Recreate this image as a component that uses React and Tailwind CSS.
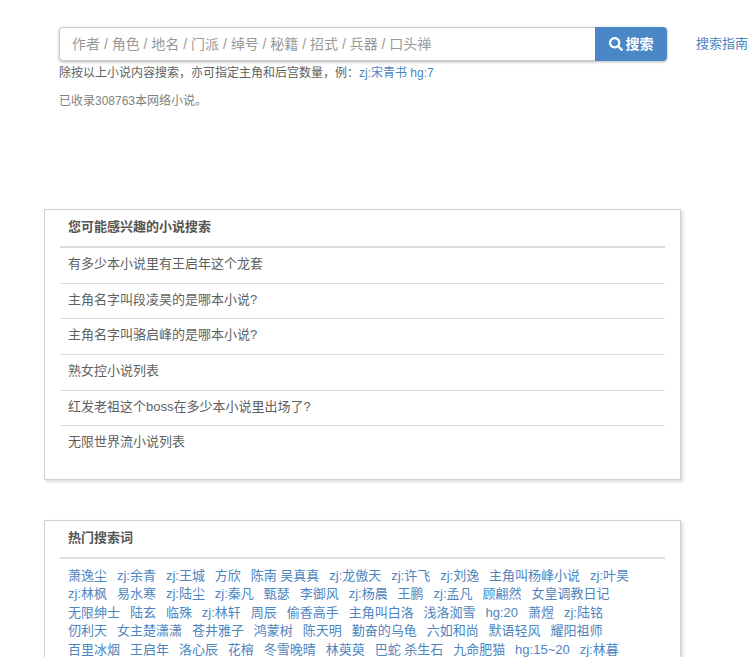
import React from 'react';
import { FaSearch } from 'react-icons/fa';

const interestRows = [
  '有多少本小说里有王启年这个龙套',
  '主角名字叫段凌昊的是哪本小说?',
  '主角名字叫骆启峰的是哪本小说?',
  '熟女控小说列表',
  '红发老祖这个boss在多少本小说里出场了?',
  '无限世界流小说列表',
];

const hotTerms = [
  '萧逸尘', 'zj:余青', 'zj:王城', '方欣', '陈南 吴真真', 'zj:龙傲天', 'zj:许飞', 'zj:刘逸', '主角叫杨峰小说', 'zj:叶昊',
  'zj:林枫', '易水寒', 'zj:陆尘', 'zj:秦凡', '甄瑟', '李御风', 'zj:杨晨', '王鹏', 'zj:孟凡', '顾翩然', '女皇调教日记',
  '无限绅士', '陆玄', '临殊', 'zj:林轩', '周辰', '偷香高手', '主角叫白洛', '浅洛洳雪', 'hg:20', '萧煜', 'zj:陆铭',
  '仞利天', '女主楚潇潇', '苍井雅子', '鸿蒙树', '陈天明', '勤奋的乌龟', '六如和尚', '默语轻风', '耀阳祖师',
  '百里冰烟', '王启年', '洛心辰', '花榕', '冬雪晚晴', '林萸萸', '巴蛇 杀生石', '九命肥猫', 'hg:15~20', 'zj:林暮',
];

const Panel = ({ title, children, className }) => (
  <section className={`w-[637px] border border-[#d0d0d0] bg-white px-[15px] shadow-[2px_2px_3px_rgba(0,0,0,0.15)] ${className}`}>
    <h3 className="h-[38px] border-b-2 border-[#dddddd] pl-2 pt-[8px] text-[13px] leading-[18px] font-bold text-[#555555]">{title}</h3>
    {children}
  </section>
);

export default function App() {
  return (
    <div className="h-screen overflow-hidden bg-white pl-[44px] pt-[27px] font-['Liberation_Sans','Noto_Sans_CJK_SC',sans-serif] text-[13px] text-[#5f5f5f]">
      <div className="ml-[15px]">
        <div className="flex items-center">
          <div className="flex h-[34px] w-[608px] rounded shadow-[0_1px_3px_rgba(0,0,0,0.3)]">
            <input
              placeholder="作者 / 角色 / 地名 / 门派 / 绰号 / 秘籍 / 招式 / 兵器 / 口头禅"
              className="min-w-0 flex-1 rounded-l border border-[#cccccc] border-r-0 bg-white px-3 text-[14px] outline-none placeholder:text-[#999999]"
            />
            <button className="flex w-[72px] items-center justify-center gap-[3px] rounded-r bg-[#4a87c7] text-[14px] font-bold text-white">
              <FaSearch className="size-[14px]" />
              搜索
            </button>
          </div>
          <a className="ml-[29px] text-[13px] text-[#4d86bf]">搜索指南</a>
        </div>
        <p className="mt-[4px] text-[12px] leading-[17px]">
          除按以上小说内容搜索，亦可指定主角和后宫数量，例：
          <a className="text-[#4d86bf]">zj:宋青书 hg:7</a>
        </p>
        <p className="mt-[11px] text-[12px] leading-[17px] text-[#808080]">已收录308763本网络小说。</p>
      </div>

      <Panel title="您可能感兴趣的小说搜索" className="mt-[99px] h-[271px]">
        <ul>
          {interestRows.map((row, i) => (
            <li key={row} className={`h-[35.7px] pl-2 pt-[7px] leading-[18px] ${i < interestRows.length - 1 ? 'border-b border-[#dddddd]' : ''}`}>
              {row}
            </li>
          ))}
        </ul>
      </Panel>

      <Panel title="热门搜索词" className="mt-[40px]">
        <div className="pl-2 pr-[25px] pt-[7.5px] leading-[18.57px]">
          {hotTerms.map((term) => (
            <React.Fragment key={term}>
              <a className="mr-[6.3px] whitespace-nowrap text-[#4d86bf]">{term}</a>{' '}
            </React.Fragment>
          ))}
        </div>
      </Panel>
    </div>
  );
}
